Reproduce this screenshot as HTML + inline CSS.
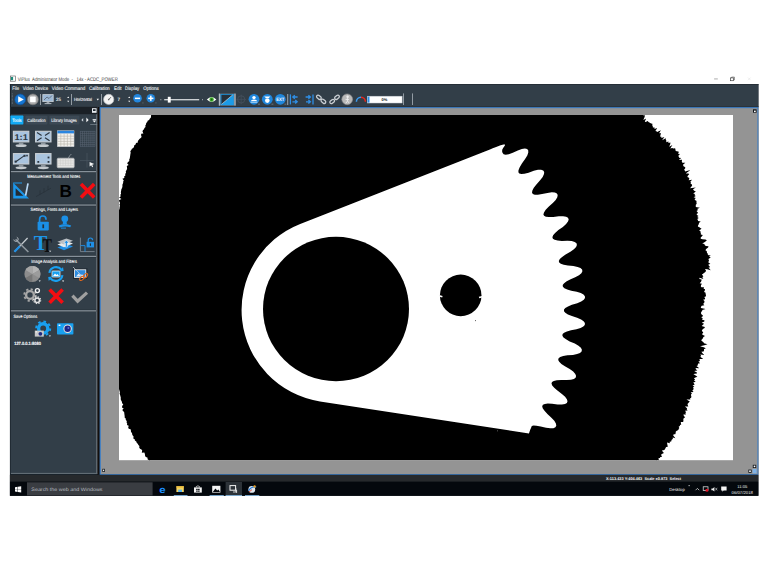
<!DOCTYPE html>
<html lang="en">
<head>
<meta charset="utf-8">
<title>ViPlus Administrator Mode - 14x - ACDC_POWER</title>
<style>
html,body{margin:0;padding:0;background:#fff;}
body{width:768px;height:572px;overflow:hidden;position:relative;}
svg{position:absolute;left:0;top:0;display:block;}
text{font-family:"Liberation Sans",sans-serif;text-rendering:geometricPrecision;}
.m{font-size:5.1px;fill:#f1f4f6;stroke:#f1f4f6;stroke-width:0.1px;}
.s{font-size:4.5px;fill:#f4f6f8;stroke:#f4f6f8;stroke-width:0.12px;}
</style>
</head>
<body>
<svg width="768" height="572" viewBox="0 0 768 572">
<!-- ===== window title bar ===== -->
<g id="titlebar">
  <rect x="10.6" y="76" width="5" height="5.2" fill="#fff" stroke="#555" stroke-width="0.6"/>
  <rect x="10.9" y="77" width="2.2" height="3.2" fill="#1d8a7a"/>
  <text x="17.8" y="81.4" font-size="5.2" fill="#3c3c3c" textLength="100" lengthAdjust="spacingAndGlyphs" xml:space="preserve">ViPlus  Administrator Mode  -   14x - ACDC_POWER</text>
  <rect x="714.1" y="78.6" width="3.7" height="0.7" fill="#888"/>
  <rect x="730.6" y="77.9" width="2.8" height="2.8" fill="none" stroke="#444" stroke-width="0.7"/>
  <path d="M731.6 77.9V77.1H734.4V79.9H733.6" fill="none" stroke="#444" stroke-width="0.6"/>
  <path d="M748 77.6l2.6 2.6M750.6 77.6l-2.6 2.6" stroke="#ddd" stroke-width="0.5"/>
</g>
<!-- ===== menu bar + toolbar background ===== -->
<g id="menubar">
  <rect x="9.9" y="84" width="748.5" height="411.8" fill="#18222b"/>
  <rect x="10.9" y="84" width="747.5" height="23.4" fill="#323e48"/>
  <rect x="9.9" y="84" width="748.5" height="0.8" fill="#232c34"/>
  <text class="m" x="12.3" y="89.8" textLength="6.7" lengthAdjust="spacingAndGlyphs">File</text>
  <text class="m" x="22.7" y="89.8" textLength="25.5" lengthAdjust="spacingAndGlyphs">Video Device</text>
  <text class="m" x="51.8" y="89.8" textLength="33.4" lengthAdjust="spacingAndGlyphs">Video Command</text>
  <text class="m" x="89" y="89.8" textLength="20.8" lengthAdjust="spacingAndGlyphs">Calibration</text>
  <text class="m" x="114" y="89.8" textLength="7.5" lengthAdjust="spacingAndGlyphs">Edit</text>
  <text class="m" x="125" y="89.8" textLength="14.2" lengthAdjust="spacingAndGlyphs">Display</text>
  <text class="m" x="143.3" y="89.8" textLength="15.4" lengthAdjust="spacingAndGlyphs">Options</text>
</g>
<!-- ===== toolbar ===== -->
<g id="toolbar">
  <path d="M12.3 93.5v11" stroke="#7b8792" stroke-width="0.8" stroke-dasharray="0.7 0.7"/>
  <!-- play -->
  <circle cx="20.2" cy="99.4" r="5.4" fill="#1676d2"/>
  <circle cx="20.2" cy="99.4" r="5.4" fill="none" stroke="#0d4f99" stroke-width="0.7"/>
  <path d="M18.2 96.2L23.8 99.4L18.2 102.6Z" fill="#fff"/>
  <!-- stop -->
  <circle cx="32.9" cy="99.4" r="5.4" fill="#a9a9a9"/>
  <circle cx="32.9" cy="99.4" r="5.4" fill="none" stroke="#777" stroke-width="0.7"/>
  <rect x="30.1" y="96.6" width="5.6" height="5.6" rx="0.6" fill="#fff"/>
  <rect x="40" y="94" width="0.8" height="11" fill="#aab3bb"/>
  <!-- monitor -->
  <rect x="42.8" y="94.6" width="10.4" height="7" fill="#9db9d6" stroke="#c9d0d6" stroke-width="0.8"/>
  <path d="M44 100l3-3 2 1.5 3-3" stroke="#4a5560" stroke-width="0.7" fill="none"/>
  <rect x="46.6" y="102" width="2.8" height="1.3" fill="#9aa3ab"/>
  <rect x="44.6" y="103.2" width="6.8" height="0.9" fill="#c2c8ce"/>
  <text class="s" x="56" y="101.3" font-size="4.6" textLength="4.9" lengthAdjust="spacingAndGlyphs">25</text>
  <path d="M67.2 98l1-1.4 1 1.4zM67.2 100.8l1 1.4 1-1.4z" fill="#fff"/>
  <rect x="71.2" y="94" width="0.8" height="11" fill="#aab3bb"/>
  <text class="s" x="74" y="100.9" font-size="4.2" textLength="17.8" lengthAdjust="spacingAndGlyphs">Horizontal</text>
  <path d="M96.6 98.8h2.4l-1.2 1.6z" fill="#fff"/>
  <rect x="101.2" y="94" width="0.8" height="11" fill="#aab3bb"/>
  <!-- clock -->
  <circle cx="108.7" cy="99.4" r="5.1" fill="#f4f4f4" stroke="#b9bdc1" stroke-width="0.7"/>
  <path d="M108.7 99.6l2.2-2.4" stroke="#555" stroke-width="0.9" fill="none"/>
  <circle cx="108.7" cy="99.6" r="0.8" fill="#666"/>
  <text class="s" x="117.6" y="101.4">7</text>
  <path d="M128.2 98l1-1.4 1 1.4zM128.2 100.8l1 1.4 1-1.4z" fill="#fff"/>
  <!-- zoom -/+ -->
  <circle cx="137.5" cy="98.3" r="4.3" fill="#2286dd"/>
  <rect x="134.9" y="97.6" width="5.2" height="1.5" fill="#fff"/>
  <circle cx="150.8" cy="98.3" r="4.3" fill="#2286dd"/>
  <rect x="148.2" y="97.6" width="5.2" height="1.5" fill="#fff"/>
  <rect x="150.05" y="95.7" width="1.5" height="5.2" fill="#fff"/>
  <rect x="142.6" y="102.6" width="0.7" height="0.7" fill="#9aa"/>
  <rect x="155.6" y="102.6" width="0.7" height="0.7" fill="#9aa"/>
  <!-- slider -->
  <rect x="160.4" y="99.3" width="0.9" height="0.9" fill="#cfd5da"/>
  <rect x="164.2" y="99.2" width="35" height="1.1" fill="#f2f4f6"/>
  <rect x="167.8" y="96.8" width="2.9" height="5.8" fill="#fff"/>
  <rect x="202" y="99.3" width="0.9" height="0.9" fill="#cfd5da"/>
  <!-- eye -->
  <path d="M206.8 99.6Q211.6 94.6 216.4 99.6Q211.6 104.4 206.8 99.6Z" fill="#fff"/>
  <circle cx="211.6" cy="99.5" r="2.2" fill="#3fae2a"/>
  <circle cx="211.6" cy="99.5" r="0.9" fill="#1d5c12"/>
  <!-- selected tool -->
  <rect x="218.6" y="93.6" width="17.2" height="12" fill="#6d7986"/>
  <rect x="219" y="93.6" width="0.8" height="12" fill="#c3cad0"/>
  <rect x="234.6" y="93.6" width="0.8" height="12" fill="#c3cad0"/>
  <rect x="220.6" y="94" width="13.2" height="11.2" fill="#1b9be8"/>
  <path d="M221.4 104.4V94.8H232.8Z" fill="#25303a"/>
  <path d="M221.4 104.4L232.8 94.8" stroke="#dfe8ef" stroke-width="0.6"/>
  <!-- dim crosshair -->
  <circle cx="241.2" cy="99.4" r="3.6" fill="none" stroke="#46525e" stroke-width="0.8"/>
  <path d="M236.4 99.4h9.6M241.2 94.6v9.6" stroke="#46525e" stroke-width="0.7"/>
  <!-- blue circle icons -->
  <circle cx="254" cy="99.3" r="5.4" fill="#1f86dc"/>
  <circle cx="254" cy="97.6" r="1.7" fill="#fff"/>
  <path d="M250.6 102.6q0-3 3.4-3t3.4 3z" fill="#fff"/>
  <rect x="250.4" y="101" width="7.2" height="0.7" fill="#1f86dc"/>
  <circle cx="267.3" cy="99.3" r="5.4" fill="#1f86dc"/>
  <path d="M264.2 96.4h6.2l-1.6 1.6h-3z" fill="#fff"/>
  <circle cx="267.3" cy="100.6" r="2.3" fill="#fff"/>
  <circle cx="280.3" cy="99.3" r="5.4" fill="#1f86dc"/>
  <text x="276.2" y="101.2" font-size="4.6" font-weight="bold" fill="#fff" textLength="8.2" lengthAdjust="spacingAndGlyphs">EXT</text>
  <rect x="258" y="103.8" width="2" height="0.6" fill="#8894a0"/>
  <rect x="271.4" y="103.8" width="2" height="0.6" fill="#8894a0"/>
  <rect x="284.4" y="103.8" width="2" height="0.6" fill="#8894a0"/>
  <rect x="287.3" y="94" width="0.9" height="11" fill="#aab3bb"/>
  <!-- arrow icons -->
  <g fill="none" stroke="#2f8fe6" stroke-width="1.3">
    <path d="M290.4 94.4v10"/>
    <path d="M297.6 97h-4.6M294.8 95.2l-2 1.8 2 1.8"/>
    <path d="M292.4 101.8h4.8M295.2 100l2 1.8-2 1.8"/>
    <path d="M313 94.4v10"/>
    <path d="M305.6 97h4.8M308.4 95.2l2 1.8-2 1.8"/>
    <path d="M306 101.8h4.6M308.4 100l2 1.8-2 1.8"/>
  </g>
  <!-- chain icons -->
  <g fill="none" stroke="#c9ced3" stroke-width="1.3">
    <rect x="-2.6" y="-1.5" width="5.2" height="3" rx="1.5" transform="translate(318.9 97.3) rotate(40)"/>
    <rect x="-2.6" y="-1.5" width="5.2" height="3" rx="1.5" transform="translate(323.4 101.3) rotate(40)"/>
    <rect x="-2.6" y="-1.5" width="5.2" height="3" rx="1.5" transform="translate(337 97.3) rotate(-40)"/>
    <rect x="-2.6" y="-1.5" width="5.2" height="3" rx="1.5" transform="translate(332.2 101.5) rotate(-40)"/>
  </g>
  <!-- grey person circle -->
  <circle cx="347.2" cy="99.3" r="5.4" fill="#b9b9b9" stroke="#8b8b8b" stroke-width="0.6"/>
  <circle cx="347.6" cy="96.8" r="1.2" fill="#eee"/>
  <path d="M347.4 98v3.2l-1.6 2M347.4 101.2l1.8 1.6M345.6 99.4h3.4" stroke="#eee" stroke-width="0.9" fill="none"/>
  <!-- gauge arc -->
  <path d="M356.4 101.8A4.6 4.6 0 0 1 361 97.2" fill="none" stroke="#3b9bf0" stroke-width="1.5"/>
  <path d="M361 97.2A4.6 4.6 0 0 1 365.4 101.8" fill="none" stroke="#e8261d" stroke-width="1.5"/>
  <!-- progress -->
  <rect x="367.3" y="96.2" width="34.8" height="6.8" fill="#fff" stroke="#c5cbd1" stroke-width="0.5"/>
  <rect x="367.6" y="96.6" width="1.9" height="6" fill="#2b8de6"/>
  <text x="381.6" y="101.2" font-size="4" font-weight="bold" fill="#222" textLength="5.8" lengthAdjust="spacingAndGlyphs">0%</text>
  <rect x="403" y="93.4" width="0.8" height="11.6" fill="#aab3bb"/>
  <rect x="412.2" y="93.4" width="0.8" height="11.6" fill="#aab3bb"/>
</g>
<!-- ===== left tool panel ===== -->
<g id="sidebar">
  <rect x="97" y="107" width="3.6" height="367.6" fill="#140f0d"/>
  <rect x="10.9" y="107" width="86.5" height="366.6" fill="#69747c"/>
  <rect x="10.9" y="107" width="85.3" height="366.2" fill="#323e48"/>
  <rect x="10.9" y="106.800" width="86.5" height="7.400" fill="#1a2026"/>
  <rect x="10.9" y="472.900" width="86.500" height="0.900" fill="#69747c"/>
  <!-- pin icon -->
  <rect x="92" y="108.2" width="4.6" height="4.6" fill="#e9edf0"/>
  <rect x="93" y="109.2" width="2.6" height="1.8" fill="#222b33"/>
  <!-- tabs -->
  <rect x="10.4" y="115.6" width="13" height="8.8" rx="0.6" fill="#12aaf4"/>
  <text x="12.3" y="121.6" font-size="4.6" fill="#fff" stroke="#fff" stroke-width="0.12" textLength="9.2" lengthAdjust="spacingAndGlyphs">Tools</text>
  <rect x="25.4" y="115.8" width="22" height="8.6" rx="0.6" fill="#3c4955"/>
  <text x="27.2" y="121.6" font-size="4.6" fill="#f4f6f8" stroke="#f4f6f8" stroke-width="0.1" textLength="18.4" lengthAdjust="spacingAndGlyphs">Calibration</text>
  <rect x="49.4" y="115.8" width="30" height="8.6" rx="0.6" fill="#3c4955"/>
  <text x="51.2" y="121.6" font-size="4.6" fill="#f4f6f8" stroke="#f4f6f8" stroke-width="0.1" textLength="25.6" lengthAdjust="spacingAndGlyphs">Library Images</text>
  <path d="M83.2 118l-1.8 1.9 1.8 1.9z" fill="#cfd6dc"/>
  <path d="M86.4 117.6l2.2 2.3-2.2 2.3z" fill="#fff"/>
  <rect x="92.600" y="119.200" width="3.600" height="0.900" fill="#f4f6f8"/>
  <path d="M92.600 120.600h3.600l-1.800 2z" fill="#f4f6f8"/>
  <rect x="90.2" y="124.2" width="7" height="0.7" fill="#7f8b96"/>
  
  <!-- separators -->
  <g fill="#232c34">
    <rect x="10.9" y="170.500" width="85.3" height="2.300"/>
    <rect x="10.9" y="203.900" width="85.3" height="2.300"/>
    <rect x="10.9" y="255.200" width="85.3" height="2.300"/>
    <rect x="10.9" y="309.700" width="85.300" height="2.300"/>
  </g>
  <g fill="#87919a">
    <rect x="10.9" y="171" width="85.3" height="1.300"/>
    <rect x="10.9" y="204.400" width="85.3" height="1.300"/>
    <rect x="10.9" y="255.700" width="85.3" height="1.300"/>
    <rect x="10.9" y="310.200" width="85.300" height="1.300"/>
  </g>
  <!-- row 1 icons -->
  <g id="ico-1to1" transform="translate(0 0.3)">
    <rect x="13.4" y="131" width="15.4" height="10.6" fill="#a9c4df" stroke="#c8ced4" stroke-width="1.1"/>
    <text x="14.4" y="139.6" font-size="8.4" font-weight="bold" fill="#2c3640" textLength="13.4" lengthAdjust="spacingAndGlyphs">1:1</text>
    <rect x="18.8" y="142.2" width="4.6" height="2" fill="#8e979f"/>
    <ellipse cx="21.1" cy="145.4" rx="5.6" ry="1.4" fill="#c4cacf"/>
  </g>
  <g id="ico-fit" transform="translate(0 0.3)">
    <rect x="35.6" y="131" width="15.4" height="10.6" fill="#a9c4df" stroke="#c8ced4" stroke-width="1.1"/>
    <path d="M37 132.2l4.6 3M49.6 132.2l-4.6 3M37 140.4l4.6-3M49.6 140.4l-4.6-3" stroke="#2c3640" stroke-width="1.2"/>
    <rect x="41" y="142.2" width="4.6" height="2" fill="#8e979f"/>
    <ellipse cx="43.3" cy="145.4" rx="5.6" ry="1.4" fill="#c4cacf"/>
  </g>
  <g id="ico-table">
    <rect x="57.4" y="130.8" width="16.6" height="15.8" fill="#f3f1ec" stroke="#cfd3d7" stroke-width="0.6"/>
    <rect x="57.4" y="130.8" width="16.6" height="2.6" fill="#2a86e0"/>
    <path d="M57.4 136.2h16.6M57.4 138.8h16.6M57.4 141.4h16.6M57.4 144h16.6M60.8 133.4v13.2M64.1 133.4v13.2M67.4 133.4v13.2M70.7 133.4v13.2" stroke="#b7b3aa" stroke-width="0.6"/>
  </g>
  <g id="ico-grid" stroke="#56626e" stroke-width="0.6">
    <path d="M80 131.4h15M80 133.6h15M80 135.8h15M80 138h15M80 140.2h15M80 142.4h15M80 144.6h15M80 146.4h15"/>
    <path d="M80.4 131v15.6M82.5 131v15.6M84.6 131v15.6M86.7 131v15.6M88.8 131v15.6M90.9 131v15.6M93 131v15.6M95 131v15.6"/>
  </g>
  <!-- row 2 icons -->
  <g id="ico-zoomwin" transform="translate(0 0.6)">
    <rect x="13.4" y="153" width="15.4" height="10.4" fill="#a9c4df" stroke="#c8ced4" stroke-width="1.1"/>
    <path d="M15.4 161.4l9-6.4" stroke="#2c3640" stroke-width="1.1"/>
    <rect x="14.6" y="160" width="2" height="2" fill="#2c3640"/><rect x="23.6" y="154.2" width="2" height="2" fill="#2c3640"/>
    <rect x="26.2" y="154.2" width="1.6" height="1.6" fill="#2c3640"/>
    <rect x="18.8" y="164" width="4.6" height="2" fill="#8e979f"/>
    <ellipse cx="21.1" cy="167.2" rx="5.6" ry="1.4" fill="#c4cacf"/>
  </g>
  <g id="ico-roi" transform="translate(0 0.6)">
    <rect x="35.6" y="153" width="15.4" height="10.4" fill="#a9c4df" stroke="#c8ced4" stroke-width="1.1"/>
    <rect x="37.4" y="160.4" width="1.8" height="1.8" fill="#2c3640"/><rect x="47.6" y="160.4" width="1.8" height="1.8" fill="#2c3640"/><rect x="47.6" y="156" width="1.8" height="1.8" fill="#2c3640"/>
    <rect x="41" y="164" width="4.6" height="2" fill="#8e979f"/>
    <ellipse cx="43.3" cy="167.2" rx="5.6" ry="1.4" fill="#c4cacf"/>
  </g>
  <g id="ico-keyboard">
    <rect x="57.2" y="158.2" width="17" height="9.6" rx="1" fill="#e6e6e4" stroke="#b5b8ba" stroke-width="0.7"/>
    <path d="M58 160.8h15.4M58 163.2h15.4M58 165.6h15.4M60.4 158.6v7M63 158.6v7M65.6 158.6v7M68.2 158.6v7M70.8 158.6v7" stroke="#c9c9c6" stroke-width="0.5"/>
    <path d="M68.4 158q1-2.400 3-4" stroke="#9aa1a7" stroke-width="0.8" fill="none"/>
  </g>
  <g id="ico-cursor">
    <path d="M80 160.6h14M87 153v14.600" stroke="#4b5763" stroke-width="0.7"/>
    <path d="M89.600 162l4.600 2-2 .8.900 2-.9.400-1-2-1.600 1.300z" fill="#f4f4f4"/>
  </g>
  <!-- measurement -->
  <text class="s" x="27.2" y="178.400" font-size="4.200" textLength="53" lengthAdjust="spacingAndGlyphs">Measurement Tools and Notes</text>
  <g id="ico-measure">
    <path d="M13.200 182.800V198.400H29Z" fill="#1b96ea"/>
    <path d="M13.200 183h8.800" stroke="#1b96ea" stroke-width="1"/>
    <path d="M15.600 188.200V195.800H23.400Z" fill="#222c35"/>
    <path d="M28 183.400L25.600 195.600" stroke="#b9d9f6" stroke-width="1.700"/>
  </g>
  <g id="ico-dim" stroke="#28323b" stroke-width="0.800" fill="none">
    <path d="M36 196.600l15-8.400M40 190.400v4M44 188.200v4M48 185.800v4"/>
  </g>
  <text x="59.400" y="197.400" font-size="17.600" font-weight="bold" fill="#000" textLength="12.400" lengthAdjust="spacingAndGlyphs">B</text>
  <path d="M81 184l13.200 13.400M94.200 184L81 197.400" stroke="#f40d12" stroke-width="3.600"/>
  <!-- settings -->
  <text class="s" x="30.600" y="211.200" font-size="4.200" textLength="47.400" lengthAdjust="spacingAndGlyphs">Settings, Fonts and Layers</text>
  <g id="ico-unlock" transform="translate(0 0.4)">
    <path d="M39.600 222v-3.200a3.200 3.200 0 0 1 6.400 0v.6" fill="none" stroke="#1b8fe6" stroke-width="1.700"/>
    <rect x="37.600" y="221.400" width="11.200" height="8.600" rx="0.800" fill="#1b8fe6"/>
    <rect x="42.400" y="224" width="1.700" height="3.800" fill="#24303a"/>
  </g>
  <g id="ico-stamp" fill="#1b8fe6">
    <circle cx="64.800" cy="218.800" r="3.400"/>
    <path d="M63.200 221h3.200l.6 3.600h-4.400z"/>
    <path d="M58.600 225.400q6.200-2.400 12.600 0l-1 1.800q-5.400-1.600-10.600.4z"/>
    <rect x="61" y="227.600" width="5" height="1" />
  </g>
  <g id="ico-tools">
    <path d="M14.600 251.600L27.600 238" stroke="#c5cbd0" stroke-width="1.300"/>
    <path d="M14.400 251.800l5.400-5.600" stroke="#1f8fe6" stroke-width="2.200"/>
    <path d="M15.600 239.400L28.400 252" stroke="#8f989f" stroke-width="1.500"/>
    <path d="M13.800 239.600a2.200 2.200 0 1 0 3-2.400" stroke="#aeb5bb" stroke-width="1" fill="none"/>
  </g>
  <g id="ico-font">
    <text x="33.800" y="250.200" font-size="21.500" font-weight="bold" fill="#1b96ea" style="font-family:'Liberation Serif',serif" textLength="13.600" lengthAdjust="spacingAndGlyphs">T</text>
    <text x="42.400" y="252.300" font-size="19.500" font-weight="bold" fill="#0b0d10" style="font-family:'Liberation Serif',serif" textLength="9.400" lengthAdjust="spacingAndGlyphs">T</text>
    <path d="M49 250.800h2.200l-1.100 1.300z" fill="#fff"/>
  </g>
  <g id="ico-layers">
    <path d="M57.400 247.400l9-3.400 6.600 2.400-9 3.800z" fill="#1f8fe6"/>
    <path d="M57.400 244.400l9-3.400 6.600 2.400-9 3.800z" fill="#e5e8ea"/>
    <path d="M57.400 241.800l9-3.200 6.600 2.200-9 3.600z" fill="#b9bfc4"/>
    <path d="M65.400 247v-4h-1.600l2.600-2.800 2.600 2.800h-1.600v4z" fill="#1f8fe6" stroke="#fff" stroke-width="0.500"/>
  </g>
  <g id="ico-axeslock">
    <path d="M80.400 237.600V251.600H94.600" fill="none" stroke="#7c8791" stroke-width="0.900"/>
    <path d="M80.400 245.600h4.600v6" fill="none" stroke="#1f8fe6" stroke-width="0.900"/>
    <path d="M88.200 242v-1.800a2.200 2.200 0 0 1 4.400 0" fill="none" stroke="#1f8fe6" stroke-width="1.200"/>
    <rect x="86.600" y="241.800" width="7.400" height="5.600" fill="#1f8fe6"/>
    <rect x="89.800" y="243.400" width="1.200" height="2.400" fill="#24303a"/>
  </g>
  <!-- image analysis -->
  <text class="s" x="31.200" y="262.700" font-size="4.200" textLength="45.700" lengthAdjust="spacingAndGlyphs">Image Analysis and Filters</text>
  <g id="ico-wheel">
    <circle cx="32.400" cy="274" r="8" fill="#8d8d8d"/>
    <path d="M32.400 274L32.400 266A8 8 0 0 1 39.300 270Z" fill="#b5b5b5"/>
    <path d="M32.400 274L39.300 270A8 8 0 0 1 39.300 278Z" fill="#9c9c9c"/>
    <path d="M32.400 274L25.500 270A8 8 0 0 1 32.400 266Z" fill="#a6a6a6"/>
    <path d="M32.400 274L32.400 282A8 8 0 0 1 25.500 278Z" fill="#777"/>
    <path d="M38.600 280.400h2.200l-1.100 1.300z" fill="#fff"/>
  </g>
  <g id="ico-refresh">
    <path d="M49.400 272.800A6.800 6.800 0 0 1 61.400 269.600" fill="none" stroke="#19a0f0" stroke-width="2.200"/>
    <path d="M62.400 275.200A6.800 6.800 0 0 1 50.400 278.400" fill="none" stroke="#19a0f0" stroke-width="2.200"/>
    <path d="M59.600 271.400l4-.4-.6-4z" fill="#19a0f0"/>
    <path d="M52.200 276.600l-4 .4.600 4z" fill="#19a0f0"/>
    <rect x="52" y="271" width="8" height="6" rx="0.600" fill="#19a0f0" stroke="#fff" stroke-width="0.700"/>
    <path d="M53 276l2-2.600 1.400 1.600 1-1 1.600 2z" fill="#fff"/>
    <path d="M62 280.600h2.200l-1.100 1.300z" fill="#fff"/>
  </g>
  <g id="ico-imgcut">
    <rect x="73.600" y="268.800" width="13.200" height="9.600" fill="#e9eef3" stroke="#16202a" stroke-width="1"/>
    <rect x="75" y="270.200" width="10.400" height="6.800" fill="#2d8ce0"/>
    <path d="M76 276.400l2.600-3 2 2 1.400-1.200 2.400 2.200z" fill="#dfeaf5"/>
    <path d="M73 267l9 9" stroke="#cfd4d8" stroke-width="0.700"/>
    <ellipse cx="81.800" cy="278.400" rx="2.600" ry="1.500" transform="rotate(-40 81.800 278.400)" fill="none" stroke="#e4671a" stroke-width="1"/>
    <ellipse cx="85.600" cy="275.600" rx="2.600" ry="1.500" transform="rotate(-50 85.600 275.600)" fill="none" stroke="#e4671a" stroke-width="1"/>
  </g>
  <g id="ico-gears" fill="none">
    <circle cx="30" cy="295" r="3.900" stroke="#a7a7a7" stroke-width="2.400"/>
    <circle cx="30" cy="295" r="5.800" stroke="#a7a7a7" stroke-width="1.800" stroke-dasharray="2.200 2.350"/>
    <circle cx="37.400" cy="290.600" r="2" stroke="#f2f2f2" stroke-width="1.400"/>
    <circle cx="37.200" cy="300.200" r="2.300" stroke="#e4e4e4" stroke-width="1.500"/>
    <circle cx="37.200" cy="300.200" r="3.500" stroke="#e4e4e4" stroke-width="1.100" stroke-dasharray="1.400 1.350"/>
  </g>
  <path d="M49.600 289.400l13 13.400M62.600 289.400L49.600 302.800" stroke="#f40d12" stroke-width="3.600"/>
  <path d="M72.400 295.600l5.200 5.600 9.400-8.600" fill="none" stroke="#a0a0a0" stroke-width="3.200"/>
  <!-- save options -->
  <text class="s" x="13.500" y="317.700" font-size="4.200" textLength="23.600" lengthAdjust="spacingAndGlyphs">Save Options</text>
  <g id="ico-gearcam">
    <circle cx="43.200" cy="328.400" r="4.600" fill="none" stroke="#19a0f0" stroke-width="3.400"/>
    <circle cx="43.200" cy="328.400" r="7" fill="none" stroke="#19a0f0" stroke-width="2" stroke-dasharray="2.600 2.900"/>
    <rect x="34.800" y="330.600" width="9" height="6" fill="#c9c9c9"/>
    <circle cx="40.400" cy="333.800" r="1.900" fill="#202a80"/>
    <rect x="35.600" y="331.400" width="1.400" height="1" fill="#fff"/>
    <path d="M48.800 335.400h2.200l-1.100 1.300z" fill="#fff"/>
  </g>
  <g id="ico-camera">
    <rect x="57" y="323.200" width="16.400" height="11.400" rx="0.800" fill="#19a0f0"/>
    <circle cx="67.600" cy="328.800" r="4.200" fill="#efe6da"/>
    <circle cx="67.600" cy="328.800" r="3.200" fill="#1c2487"/>
    <circle cx="68.400" cy="328" r="1" fill="#5d6fd0"/>
    <rect x="58.600" y="324.600" width="1.800" height="1.400" fill="#fff"/>
  </g>
  <text class="s" x="14.200" y="345.200" font-size="4" font-weight="bold" textLength="26.800" lengthAdjust="spacingAndGlyphs">127.0.0.1:8080</text>
</g>
<!-- ===== image viewport ===== -->
<g id="viewport">
  <rect x="100.700" y="107.400" width="757.800" height="0" fill="none"/>
  <rect x="100.200" y="106" width="658.200" height="1" fill="#2a333b"/>
  <rect x="99.600" y="107.100" width="658.700" height="367.700" fill="#3f7fc6"/>
  <rect x="100.900" y="108.200" width="656.500" height="365.800" fill="#949494"/>
  <rect x="119" y="115" width="614" height="345.200" fill="#fff"/>
  <clipPath id="imgclip"><rect x="119" y="115" width="614" height="345.200"/></clipPath>
  <g clip-path="url(#imgclip)">
    <path d="M151.1 114 641 114 641 115 643.5 113.8 643.5 115.4 645 115.2 644.5 117.2 643.3 120 646.2 118.5 644.8 121.4 645.5 122.1 647.9 121 648.4 122 649.4 122.4 650.2 123.1 651.1 123.6 652.4 123.8 652.3 125.4 652.8 126.3 652.9 127.5 654.6 127.4 654.5 128.9 657.2 127.9 655.4 130.9 656.5 131.3 657.1 132.1 660.9 130.3 659.1 133.2 660.8 133.1 660.6 134.7 660 136.6 661.4 136.7 661.4 138.1 664.4 136.9 662.1 140.3 665.8 138.3 665.8 139.7 666.4 140.7 666.2 142.3 668.5 141.5 668.4 143 670.4 142.6 670.3 144.1 669.2 146.7 672.4 145 670.3 148.5 672.2 148.1 673.3 148.5 675.1 148.2 675.4 149.3 675.6 150.7 676.6 151.2 678.5 151.5 678.7 152.5 678 153.8 679.9 154.1 678.2 155.9 678.9 156.7 679.1 157.7 681.2 157.9 678.8 160 682 159.8 681.9 160.9 681.8 162 682.5 162.8 685.3 162.8 683 164.8 683.3 165.7 683.8 166.6 685 167 685.4 168 684 169.9 684.9 170.5 685.2 171.6 690.4 170.1 685.7 173.6 688.1 173.6 689.3 174.1 687.4 176.3 687.7 177.3 689.1 177.7 689.3 178.8 688.6 180.3 692.1 179.7 690.3 181.8 690.9 182.6 690.6 183.8 692 184.4 692.1 185.4 691.3 186.7 690 188.2 695.8 187.4 693 189.3 693.7 190.2 694.6 191 695.9 191.6 693.2 193.5 694.9 194 694.6 195.2 695.8 196 693.6 197.2 695.9 198 694.7 199.1 694.9 200.1 696.7 200.9 696.3 202 696.7 202.9 696.5 204 695.7 205.1 695.9 206.1 695.7 207.1 699.9 207.7 697.1 209 698.1 209.9 696.5 211.1 697.4 212 698.1 212.9 696.6 214.1 697 215.1 698.5 215.9 697.1 217.1 698.8 217.9 697.2 219.1 697.9 220 698 221.1 700.7 221.4 698.9 223 698.9 224.1 698 225.4 697.9 226.6 699.4 227.2 700.4 228 701.6 228.7 699.1 230.5 700.5 231.2 700.5 232.3 700.9 233.3 700.8 234.4 702.8 234.9 702 236.2 700.7 237.6 700.7 238.7 702.5 239.3 705.4 239.6 706.9 240.3 704.9 241.9 702.2 243.6 704.5 244.1 704.6 245.1 705.9 245.9 708.5 246.3 708.1 247.4 706.1 249 705.4 250.3 706.6 251 707 252 706.9 253 708.3 253.9 707.5 255 710.7 255.6 709 256.8 710.8 257.6 708.4 258.9 708.8 259.9 709 260.9 708.2 262 709 262.9 710.4 263.8 708.2 264.7 710.2 267.3 708.5 267.4 710.7 270.2 707.3 269.2 705 268.9 706.2 271 705.4 271.7 704.9 272.6 703.6 273 703.2 273.9 701.8 274.3 703.4 276.5 702.3 277 703.4 279 699.5 277.7 699.4 279.1 701.6 279.5 701.5 280.6 701 281.8 699.7 283.3 702 283.7 701.1 285 700.8 286.3 701.4 287.2 704 287.3 703.6 288.7 705.1 289.2 704.8 290.5 704 292.1 705.4 292.6 705.7 294.1 705.9 295.2 706.1 296.3 704.2 297 705 298.1 705.1 299.2 703.1 299.8 704.4 301.1 704.5 302.2 703.9 303.1 703.2 304 704.4 305.3 701.7 305.8 700.9 307 700.9 308 705.6 309 702.3 310 702.2 311 701.1 312 701.1 313 701.1 314 702.3 315 703.2 315.9 701.2 317.2 702.8 318.3 701.9 319.5 704.6 320.4 704.3 321.6 701.7 322.8 704.1 323.8 703 324.8 701.6 325.9 704.8 326.9 704.6 327.9 702.9 328.9 702.2 329.9 701.8 330.9 703 332 703.2 333 701.8 334 703 335 705 336 703.4 337.1 703 338.1 702.4 339.1 701.3 340.1 701.7 341.1 703.3 342.1 704 343.2 707.5 344.2 704.3 345.2 700.1 346.2 703.7 347.2 705.8 348.2 703.9 349.3 704.1 350.3 703.6 351.5 701.4 351.8 702.5 353.3 704.3 355.1 700.3 354.6 701.2 356 700.2 356.7 703.3 359 700.4 359 699.2 359.6 700.1 361 698.4 361.5 700.1 363.2 698.2 363.5 697.8 364.5 697.8 365.6 696.5 366.1 699.3 368.3 695.6 368 695.9 369.2 697.4 370.5 694.2 371 696.9 372.5 696.9 373.5 693.3 374 695.6 375.4 697.4 376.8 695.4 377.5 693.9 378.3 695.1 379.5 694 380.4 695.7 381.7 693.2 382.4 694 383.5 694.6 384.7 692.5 385.4 694.4 386.7 692.9 387.5 693.7 388.7 693.2 389.7 692.3 390.6 693.6 392.1 690.7 392.2 692 393.7 690.9 394.4 691.1 395.6 691.4 396.8 691.1 397.7 690 398.4 690.4 399.6 686.5 399.4 689.8 401.6 688.8 402.4 688.2 403.3 687.5 404.1 687.8 405.3 688.3 406.5 684.9 406.5 687.1 408.3 686.7 409.2 687.6 410.6 685 410.8 686.1 412.3 685.3 413.1 686 414.4 683.4 414.5 683.8 415.7 685 417.3 684.3 418.1 683.3 418.8 683.4 419.9 683.4 421 683.1 422 680.8 422.1 680.9 423.3 681.3 424.5 680 425.1 679.9 426.1 678.6 426.7 679.4 428.1 678.6 428.9 678.4 430 677.3 430.4 676.4 431 675.7 431.8 675.7 433.1 675.3 434.2 673.8 434.3 673.1 435.2 675.4 438.2 672.7 437.4 672.9 438.9 671.9 439.4 671.4 440.4 671.2 441.5 669.6 441.7 669.9 443.2 667.1 442.4 667.2 443.8 667.5 445.3 667.8 446.7 666.1 446.9 665.7 447.8 665.2 448.8 664.6 449.7 663.4 450.2 661.8 450.4 663.9 453 663 453.6 661.7 454.1 661.1 454.9 662.1 456.8 660.4 457 659.8 457.9 658.4 458.2 659 460.6 656.7 460 656.7 461 149.2 461 149.2 460.2 147.7 459.4 147.4 457.6 145.7 457 145 455.5 144.9 453.9 144.3 452.5 141.8 452.7 142.2 450.6 141.5 449.4 140 448.8 139.2 447.6 139.4 445.9 138.4 444.9 137.7 443.8 136.7 442.7 136.3 441.4 134.9 440.6 134.7 439.2 133.3 438.4 133.6 436.6 132.7 435.6 132.2 434.4 132 433 131 432 130.9 430.6 130.6 429.3 128.7 428.8 128.2 427.6 128.7 425.8 127 425.1 127.2 423.6 126.6 422.5 126.8 421.1 125.8 420 125.7 418.6 124.6 417.6 124.7 416.2 124.5 414.9 124.3 413.6 124.2 412.3 123.3 411.2 122.2 410.1 123.7 408.4 122 407.4 122.2 406 123.3 404.3 122.1 403.2 121.9 401.8 121.2 400.5 120.7 399.2 120.8 397.8 120.5 396.4 120.1 395.1 119.6 393.8 119.9 392.3 119.5 391 119.2 389.6 118 389.6 118 209.8 119.2 209.8 119.5 208.5 119.6 207.1 119.9 205.8 119.5 204.4 120.1 203.1 119.3 201.6 119 200.2 121.4 199.1 119.2 197.5 120.8 196.3 120.3 194.9 121.1 193.6 120.8 192.2 121.1 190.9 121.3 189.6 121.9 188.3 122.4 187.1 122.4 185.7 122.5 184.3 123.2 183.1 123.1 181.7 123.8 180.5 122.4 178.8 124.4 177.9 124.1 176.4 125.4 175.4 125.2 173.9 126 172.7 125.8 171.3 126.6 170.1 127.1 168.8 127 167.4 126.8 166 128.6 165.1 127.1 163.2 128.1 162.1 129.3 161 129.2 159.5 129.8 158.2 130 156.8 130.2 155.5 130.4 154.1 130.7 152.8 130.3 151.2 131.3 150 131.9 148.7 133.3 148 134 146.7 134.3 145.2 135.6 144.4 136 143 137.9 142.6 137.8 141 138.7 140 139.4 138.9 140.7 138.1 141.6 137.1 141.1 135.3 141.2 133.8 143.4 133.5 142.5 131.6 142.9 130.2 144 129.3 144.4 128.1 145.5 127.1 145.3 125.5 146 124.4 146.2 123 147.3 122.1 147.6 120.7 149.1 120 149.7 118.8 150.8 117.8 151 116.4 151.1 115Z" fill="#000"/>
    <path d="M300.2 223.9 L489.3 149.7 490.5 149.2 492.7 148.3 496.1 147 500.6 145.2 503.5 144.4 505 144.5 504.9 145.6 503.3 147.7 502.3 149.5 502.1 151.3 502.5 152.8 503.6 154.2 505.7 154.7 508.8 154.2 512.8 152.7 517.8 150.4 521.8 148.9 524.9 148.4 527.1 148.9 528.2 150.3 528.3 152.5 527.3 155.4 525.1 159.1 521.9 163.6 519.7 167.3 518.5 170.2 518.4 172.2 519.3 173.5 521.4 174 524.4 173.7 528.6 172.7 533.8 170.8 538 169.8 541.1 169.7 543.2 170.4 544.2 171.9 544 174.1 542.7 176.9 540.1 180.3 536.4 184.4 533.8 187.8 532.4 190.6 532 192.6 532.8 194 534.8 194.7 537.9 194.8 542.1 194.1 547.5 192.9 551.8 192.3 554.9 192.5 556.9 193.4 557.7 195.1 557.3 197.2 555.7 199.9 552.8 203 548.6 206.7 545.7 209.8 544 212.4 543.4 214.4 544.1 215.8 545.9 216.7 549 217.1 553.3 217 558.8 216.3 563.1 216.2 566.1 216.7 568 217.8 568.7 219.6 568 221.6 566.1 224.1 562.9 226.9 558.4 230.1 555.1 232.9 553.1 235.3 552.4 237.2 552.9 238.7 554.6 239.8 557.6 240.5 561.9 240.9 567.4 240.8 571.7 241.1 574.7 242 576.5 243.3 576.9 245.1 576.1 247.1 573.9 249.3 570.4 251.8 565.6 254.5 562.1 256.9 559.8 259 558.8 260.9 559.2 262.4 560.8 263.7 563.7 264.8 567.9 265.5 573.4 266 577.6 266.9 580.5 268 582.1 269.5 582.4 271.3 581.4 273.3 579 275.3 575.2 277.3 570.1 279.5 566.3 281.5 563.9 283.4 562.7 285.1 562.9 286.7 564.4 288.2 567.2 289.5 571.3 290.7 576.7 291.8 580.8 293.1 583.5 294.5 584.9 296.2 585 298.1 583.8 299.8 581.2 301.6 577.2 303.2 571.9 304.8 568 306.4 565.3 308 564 309.6 564 311.2 565.3 312.8 567.9 314.4 571.9 316.1 577.1 317.8 581.1 319.5 583.6 321.2 584.9 323 584.8 324.9 583.3 326.5 580.6 328 576.4 329.2 571 330.2 566.9 331.4 564.1 332.7 562.6 334.1 562.4 335.7 563.5 337.4 566 339.3 569.7 341.4 574.8 343.6 578.5 345.8 580.9 347.8 581.9 349.7 581.6 351.5 580 353 577.1 354.1 572.9 354.9 567.4 355.3 563.2 356.1 560.2 357.1 558.6 358.3 558.2 359.9 559.2 361.7 561.4 363.9 564.9 366.3 569.7 369.1 573.2 371.6 575.3 373.9 576.1 375.9 575.6 377.7 573.9 379 570.9 379.8 566.6 380.1 561.1 379.9 556.8 380.2 553.8 380.9 552 382 551.5 383.5 552.2 385.4 554.2 387.8 557.4 390.6 561.9 393.9 565.1 396.7 566.9 399.2 567.5 401.3 566.9 403 565 404.1 561.9 404.6 557.6 404.5 552.1 403.7 547.8 403.5 544.8 403.9 542.9 404.8 542.2 406.2 542.7 408.2 544.5 410.8 547.4 413.9 551.4 417.7 554.3 420.8 555.9 423.5 556.3 425.7 555.4 427.3 553.4 428.2 550.3 428.3 546.1 427.7 540.7 426.4 536.5 425.7 533.6 425.6 531.8 426.1 531.3 427.3 530.8 428.4 530.3 429.6 529.9 430.7 529.5 431.8 529.3 432.6 529.1 433.1 529 433.4 L320 401.4 A92.5 92.5 0 0 1 300.2 223.9Z" fill="#fff"/>
    <ellipse cx="336" cy="309" rx="73" ry="72.200" fill="#000"/>
    <circle cx="460.700" cy="295.400" r="20.800" fill="#000"/>
    <path d="M439.400 295l3.200.9-.4 1.500-2.800-.6zM482.200 296l-3.400.7.500 1.600 2.900-.7z" fill="#fff"/>
    <rect x="475.200" y="320.300" width="0.800" height="0.800" fill="#000"/>
    <rect x="497.200" y="430.600" width="0.600" height="0.600" fill="#fff"/>
  </g>
  <rect x="150" y="460.100" width="506" height="0.500" fill="#b8b8b8"/>
  <!-- corner widgets -->
  <rect x="753" y="109.300" width="3.600" height="3.400" fill="#10151a"/>
  <rect x="754" y="110.600" width="1.700" height="1.500" fill="#fff"/>
  <rect x="102.400" y="468.800" width="2.400" height="3.200" fill="#10151a"/>
  <rect x="103.100" y="469.600" width="1" height="1.600" fill="#fff"/>
  <rect x="752.800" y="464.800" width="3.400" height="3.200" fill="#10151a"/>
  <rect x="753.700" y="465.600" width="1.600" height="1.600" fill="#fff"/>
  <rect x="748.400" y="469.600" width="3.200" height="3.200" fill="#10151a"/>
  <rect x="749.200" y="470.400" width="1.600" height="1.600" fill="#fff"/>
  <rect x="752.600" y="469" width="4" height="4.400" fill="#7fb2e6"/>
</g>
<!-- ===== status bar ===== -->
<g id="statusbar">
  <rect x="9.900" y="474.900" width="748.500" height="6.800" fill="#26292c"/>
  <text x="606" y="480.300" font-size="4" font-weight="bold" fill="#f4f6f8" textLength="75" lengthAdjust="spacingAndGlyphs" xml:space="preserve">X:113.433 Y:404.463  Scale x0.873  Select</text>
</g>
<!-- ===== windows taskbar ===== -->
<g id="taskbar">
  <rect x="9.900" y="481.700" width="748.500" height="14.100" fill="#04080d"/>
  <!-- start -->
  <path d="M15 487.200l2.600-.4v2.400H15zM18 486.700l3.200-.5v3H18zM15 489.600h2.600v2.400l-2.600-.4zM18 489.600h3.200v3l-3.200-.5z" fill="#fff"/>
  <!-- search -->
  <rect x="27" y="482.300" width="125.600" height="13.200" fill="#3a3d42"/>
  <text x="31.300" y="491" font-size="4.900" fill="#b9bcc0" textLength="71.200" lengthAdjust="spacingAndGlyphs">Search the web and Windows</text>
  <!-- edge -->
  <text x="159.200" y="493" font-size="9.600" font-weight="bold" fill="#1e90ff" textLength="6.400" lengthAdjust="spacingAndGlyphs">e</text>
  <!-- explorer -->
  <rect x="176.400" y="486.200" width="7.400" height="5.800" fill="#f7d560"/>
  <rect x="176.400" y="486.200" width="7.400" height="1.400" fill="#e9b93a"/>
  <rect x="178.200" y="489.600" width="3.800" height="2.400" fill="#5db4ee"/>
  <rect x="173.800" y="495.100" width="13.700" height="0.800" fill="#8fc6f2"/>
  <!-- store -->
  <path d="M194 487.400h7.800v5.200H194z" fill="#f4f4f4"/>
  <path d="M196.200 487.400v-.8q1.700-1.600 3.400 0v.8" fill="none" stroke="#f4f4f4" stroke-width="0.700"/>
  <path d="M196.200 488.800h1.500v1.300h-1.500zM198.100 488.800h1.500v1.300h-1.500zM196.200 490.500h1.500v1.300h-1.500zM198.100 490.500h1.500v1.300h-1.500z" fill="#04080d"/>
  <!-- photos -->
  <rect x="212.200" y="485.800" width="8.200" height="6.800" fill="#f4f4f4"/>
  <path d="M212.800 492l2.600-3.400 1.800 2 1.200-1 1.600 2.400z" fill="#04080d"/>
  <rect x="209.600" y="495.100" width="14.200" height="0.800" fill="#8fc6f2"/>
  <!-- active app -->
  <rect x="225.600" y="482" width="16.400" height="14" fill="#2c3238"/>
  <rect x="230" y="485.600" width="5.600" height="4.600" fill="none" stroke="#f4f4f4" stroke-width="1"/>
  <path d="M236 488.400v3.600h-3M236.600 490v3" stroke="#f4f4f4" stroke-width="0.800" fill="none"/>
  <rect x="225.600" y="495.100" width="16.400" height="0.800" fill="#8fc6f2"/>
  <!-- paint-like app -->
  <circle cx="251.800" cy="489.400" r="3.400" fill="#dfe6ee"/>
  <path d="M248.600 490.600q3-4.600 7.600-3.600" fill="none" stroke="#2d7fd8" stroke-width="1.300"/>
  <circle cx="254.600" cy="486.400" r="1.200" fill="#f2a21c"/>
  <path d="M249 492l3-2.400" stroke="#e0452a" stroke-width="0.900"/>
  <rect x="245" y="495.100" width="14.300" height="0.800" fill="#8fc6f2"/>
  <!-- tray -->
  <text x="669.300" y="490.600" font-size="4.300" fill="#f0f0f0" textLength="15.500" lengthAdjust="spacingAndGlyphs">Desktop</text>
  <rect x="688.400" y="485.400" width="1.600" height="0.700" fill="#ddd"/>
  <path d="M695.600 490.200l1.800-1.800 1.800 1.800" fill="none" stroke="#f0f0f0" stroke-width="0.700"/>
  <rect x="703.200" y="486.800" width="4.800" height="3.600" fill="none" stroke="#f0f0f0" stroke-width="0.700"/>
  <rect x="705.600" y="489" width="2.600" height="2.600" fill="#e81123"/>
  <path d="M711.400 488.400h1.400l1.600-1.400v4.600l-1.600-1.400h-1.400z" fill="#f0f0f0"/>
  <path d="M715.400 487.800l1.800 2.600M717.200 487.800l-1.800 2.600" stroke="#f0f0f0" stroke-width="0.500"/>
  <path d="M721.200 486.400h5.400v4h-3l-1.200 1.400v-1.400h-1.200z" fill="#f4f4f4"/>
  <text x="737.300" y="487.600" font-size="4.100" fill="#f0f0f0" textLength="10" lengthAdjust="spacingAndGlyphs">11:05</text>
  <text x="731.500" y="493.600" font-size="4.100" fill="#f0f0f0" textLength="21.500" lengthAdjust="spacingAndGlyphs">06/07/2018</text>
</g>
</svg>
</body>
</html>
